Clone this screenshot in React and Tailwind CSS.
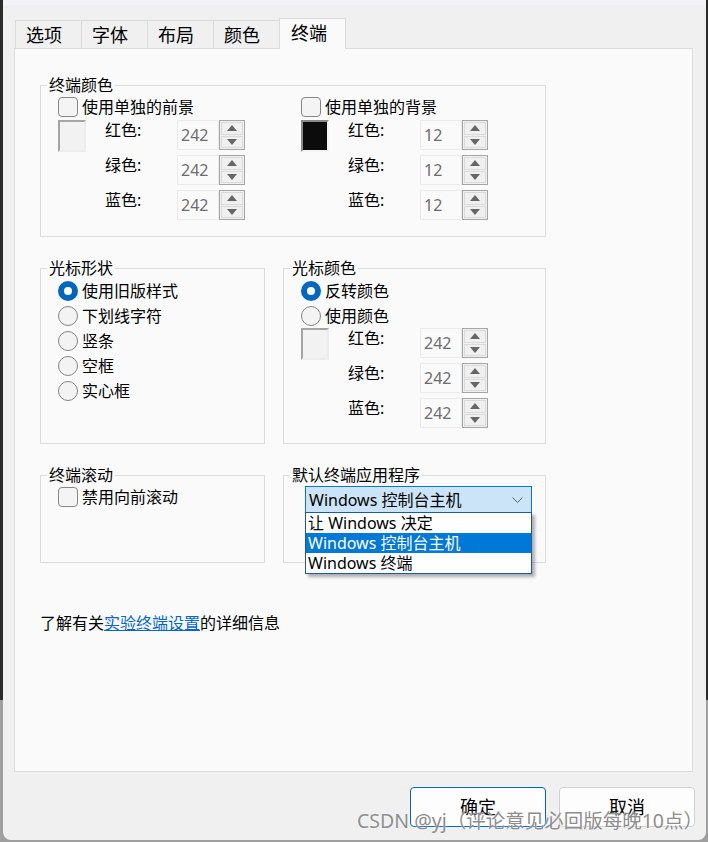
import React from 'react';

const Checkbox = () => (
  <div className="w-[20px] h-[20px] shrink-0 rounded-[4px] border border-[#858585] bg-[#f4f4f4]" />
);

const Radio = ({ checked }) =>
  checked ? (
    <div className="w-[20px] h-[20px] shrink-0 rounded-full bg-[#0067c0] flex items-center justify-center">
      <div className="w-[8px] h-[8px] rounded-full bg-white" />
    </div>
  ) : (
    <div className="w-[20px] h-[20px] shrink-0 rounded-full border border-[#858585] bg-[#f3f3f3]" />
  );

const Spinner = ({ value }) => (
  <div className="flex h-[30px]">
    <div className="w-[42px] h-full border border-[#ebebeb] bg-[#fafafa] pl-[3px] text-[#6d6d6d] leading-[28px]">
      {value}
    </div>
    <div className="w-[26px] h-full flex flex-col border border-[#a5a5a5] bg-[#f0f0f0] p-px gap-px">
      <div className="flex-1 border border-[#dadada] flex items-center justify-center">
        <svg width="10" height="6" viewBox="0 0 10 6">
          <polygon points="0,6 5,0 10,6" fill="#666" />
        </svg>
      </div>
      <div className="flex-1 border border-[#dadada] flex items-center justify-center">
        <svg width="10" height="6" viewBox="0 0 10 6">
          <polygon points="0,0 10,0 5,6" fill="#666" />
        </svg>
      </div>
    </div>
  </div>
);

const ColorRows = ({ dark, value }) => (
  <div className="flex">
    {dark ? (
      <div className="w-[28px] h-[32px] border-2 border-t-[#8a8a8a] border-l-[#8a8a8a] border-r-[#f4f4f4] border-b-[#f4f4f4] bg-[#0c0c0c]" />
    ) : (
      <div className="w-[28px] h-[32px] border-2 border-t-[#a5a5a5] border-l-[#a5a5a5] border-r-[#ececec] border-b-[#ececec] bg-[#f2f2f2]" />
    )}
    <div className="ml-[19px] flex flex-col gap-[5px]">
      {['红色:', '绿色:', '蓝色:'].map((l) => (
        <div key={l} className="flex">
          <span className="w-[72px] leading-[20px]">{l}</span>
          <Spinner value={value} />
        </div>
      ))}
    </div>
  </div>
);

const Group = ({ label, className, children }) => (
  <div className={`relative border border-[#dcdcdc] ${className}`}>
    <span className="absolute -top-[10px] left-[6px] bg-[#fafafa] px-[2px] leading-[18px] whitespace-nowrap">
      {label}
    </span>
    {children}
  </div>
);

const tabs = ['选项', '字体', '布局', '颜色', '终端'];

export default function App() {
  return (
    <div className="w-[708px] h-[842px] flex bg-[#9f9f9f] overflow-hidden text-black text-[16px] font-['Noto_Sans','Noto_Sans_CJK_SC',sans-serif]">
      <div className="w-[3px] shrink-0">
        <div className="h-[700px] bg-[#2b2b2b]" />
      </div>

      <div className="relative w-[703px] h-[840px] shrink-0 bg-[#f0f0f0] rounded-b-[8px] flex flex-col">
        <div className="h-[5px] bg-[#f3f3f7]" />

        {/* Tabs */}
        <div className="mt-[12px] h-[31px] flex items-end pl-[12px]">
          {tabs.map((t, i) =>
            i === 4 ? (
              <div
                key={t}
                className="relative top-px z-10 w-[67px] h-[31px] border border-b-0 border-[#dadada] bg-[#fafafa] pl-[11px] text-[18px] leading-[29px]"
              >
                {t}
              </div>
            ) : (
              <div
                key={t}
                className="w-[67px] h-[28px] -mr-px border border-b-0 border-[#dadada] bg-[#f0f0f0] pl-[10px] text-[18px] leading-[28px]"
              >
                {t}
              </div>
            )
          )}
        </div>

        {/* Panel */}
        <div className="ml-[11px] w-[679px] h-[724px] border border-[#dcdcdc] bg-[#fafafa] pl-[25px] pt-[36px] flex flex-col">
          <Group label="终端颜色" className="w-[506px] h-[152px] pl-[17px] pt-[11px] flex">
            <div className="w-[243px]">
              <div className="flex items-center gap-[4px] h-[20px]">
                <Checkbox />
                <span>使用单独的前景</span>
              </div>
              <div className="mt-[3px]">
                <ColorRows value="242" />
              </div>
            </div>
            <div>
              <div className="flex items-center gap-[4px] h-[20px]">
                <Checkbox />
                <span>使用单独的背景</span>
              </div>
              <div className="mt-[3px]">
                <ColorRows dark value="12" />
              </div>
            </div>
          </Group>

          <div className="mt-[31px] flex gap-[18px]">
            <Group label="光标形状" className="w-[225px] h-[176px] pl-[17px] pt-[9px]">
              {['使用旧版样式', '下划线字符', '竖条', '空框', '实心框'].map((r, i) => (
                <div key={r} className="h-[25px] flex items-center gap-[4px]">
                  <Radio checked={i === 0} />
                  <span>{r}</span>
                </div>
              ))}
            </Group>
            <Group label="光标颜色" className="w-[263px] h-[176px] pl-[17px] pt-[9px]">
              <div className="h-[25px] flex items-center gap-[4px]">
                <Radio checked />
                <span>反转颜色</span>
              </div>
              <div className="h-[25px] flex items-center gap-[4px]">
                <Radio />
                <span>使用颜色</span>
              </div>
              <ColorRows value="242" />
            </Group>
          </div>

          <div className="mt-[31px] flex gap-[18px]">
            <Group label="终端滚动" className="w-[225px] h-[88px] pl-[17px] pt-[11px]">
              <div className="flex items-center gap-[4px] h-[20px]">
                <Checkbox />
                <span>禁用向前滚动</span>
              </div>
            </Group>
            <Group label="默认终端应用程序" className="w-[263px] h-[88px] pl-[21px] pt-[10px]">
              <div className="relative w-[227px] h-[27px] border border-[#0078d4] bg-[#cce4f7] pl-[3px] flex items-center justify-between pr-[8px]">
                <span className="leading-[20px]">Windows 控制台主机</span>
                <svg width="11" height="6" viewBox="0 0 11 6">
                  <polyline points="0.5,0.5 5.5,5.5 10.5,0.5" fill="none" stroke="#5f5f5f" strokeWidth="1" />
                </svg>
                <div className="absolute left-[-1px] top-full w-[227px] z-20 border border-[#1e5aa0] bg-white shadow-[3px_3px_3px_rgba(0,0,0,0.3)] leading-[20px]">
                  <div className="h-[20px] pl-[2px]">让 Windows 决定</div>
                  <div className="h-[20px] pl-[2px] bg-[#0078d7] text-white">Windows 控制台主机</div>
                  <div className="h-[20px] pl-[2px]">Windows 终端</div>
                </div>
              </div>
            </Group>
          </div>

          <p className="mt-[50px] leading-[20px]">
            了解有关<span className="text-[#0066cc] underline">实验终端设置</span>的详细信息
          </p>
        </div>

        {/* Buttons */}
        <div className="mt-[15px] flex justify-end gap-[13px] pr-[11px]">
          <button className="w-[136px] h-[40px] rounded-[4px] border border-[#0067c0] bg-[#fdfdfd] text-[18px]">
            确定
          </button>
          <button className="w-[136px] h-[40px] rounded-[4px] border border-[#d0d0d0] bg-[#fdfdfd] text-[18px]">
            取消
          </button>
        </div>

        <div className="absolute left-[354px] top-[810px] text-[19.5px] leading-[22px] text-[#8e8e8e] whitespace-nowrap [text-shadow:0_0_2px_#fff]">
          CSDN @yj（评论意见必回版每晚10点）
        </div>
      </div>

      <div className="w-[2px] shrink-0">
        <div className="h-[700px] bg-[#2b2b2b]" />
      </div>
    </div>
  );
}
